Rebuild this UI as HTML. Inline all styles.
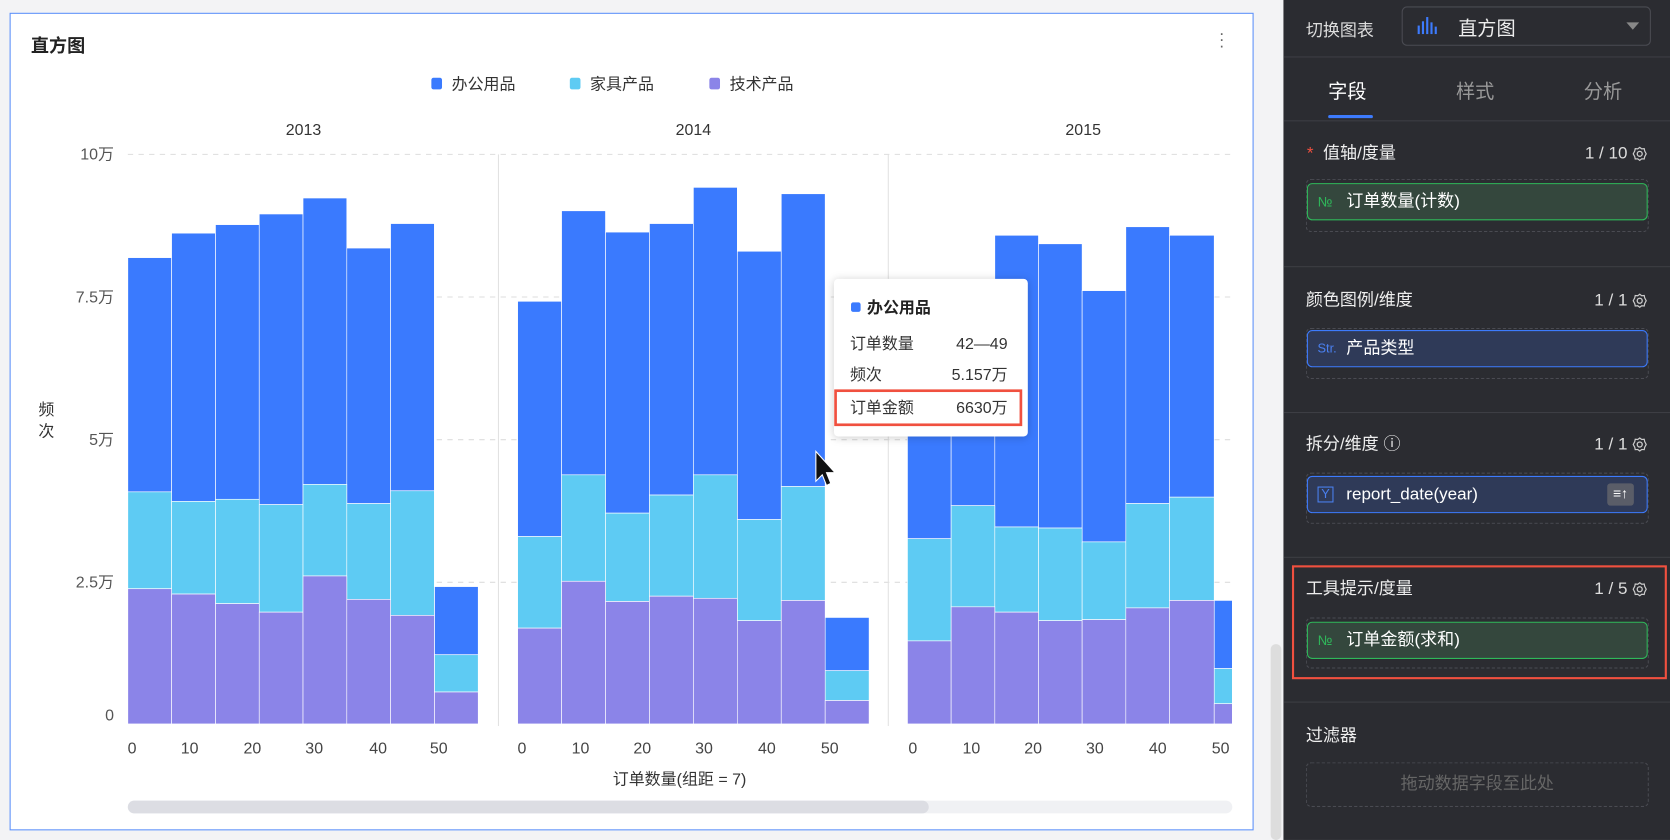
<!DOCTYPE html>
<html><head><meta charset="utf-8"><style>
*{margin:0;padding:0;box-sizing:border-box}
body{width:1670px;height:840px;overflow:hidden;background:#f3f3f5;font-family:"Liberation Sans","Noto Sans CJK SC",sans-serif}
#w{position:absolute;left:0;top:0;width:1568px;height:789px;transform:scale(1.0651,1.0646);transform-origin:0 0}
.a{position:absolute;white-space:nowrap}
#card{position:absolute;left:9px;top:12px;width:1168px;height:768px;background:#fff;border:1.5px solid #5b8ff9}
#panel{position:absolute;left:1205px;top:0;width:363px;height:789px;background:#2b2c31;color:#e8e8ea}
.hl{position:absolute;left:0;width:363px;height:1px;background:#3d3e44}
.sec{font-size:16px;color:#eee;line-height:20px}
.cnt{font-size:16px;color:#ddd;line-height:20px;right:21px}
.cnt svg{vertical-align:-3px;margin-left:4px}
.fld{position:absolute;left:22px;width:320px;height:35px;border-radius:5px;font-size:16px;line-height:33px;padding-left:36px;color:#fff}
.dz{position:absolute;left:21px;width:322px;border:1px dashed #4a4b52;border-radius:5px}
.g{background:#34473d;border:1.5px solid #2fb85a}
.b{background:#2f3a58;border:1.5px solid #3d7bfd}
.ic{position:absolute;left:9px;top:0;font-size:13px}
</style></head><body><div id="w">
<div id="card">
<div class="a" style="left:19px;top:16px;font-size:17px;font-weight:bold;color:#222">直方图</div>
<div class="a" style="left:1134px;top:16px;font-size:16px;color:#666;line-height:6px;width:6px;text-align:center">·<br>·<br>·</div>
</div>
<svg class="a" style="left:0;top:0" width="1180" height="789" font-family="Liberation Sans,Noto Sans CJK SC,sans-serif">
<g font-size="15" fill="#333">
<rect x="405" y="73" width="10" height="11" rx="2" fill="#3a7afe"/><text x="424" y="84">办公用品</text>
<rect x="535" y="73" width="10" height="11" rx="2" fill="#5ecbf3"/><text x="554" y="84">家具产品</text>
<rect x="666" y="73" width="10" height="11" rx="2" fill="#8b84e8"/><text x="685" y="84">技术产品</text>
</g>
<g font-size="15" fill="#333" text-anchor="middle"><text x="285" y="127">2013</text><text x="651" y="127">2014</text><text x="1017" y="127">2015</text></g>
<g stroke="#ddd" stroke-dasharray="5,5"><line x1="120" x2="1157" y1="145" y2="145"/><line x1="120" x2="1157" y1="279" y2="279"/><line x1="120" x2="1157" y1="413" y2="413"/><line x1="120" x2="1157" y1="547" y2="547"/></g>
<g stroke="#e2e2e2"><line x1="468" x2="468" y1="145" y2="682"/><line x1="834" x2="834" y1="145" y2="682"/></g>
<g font-size="15" fill="#555" text-anchor="end"><text x="107" y="150">10万</text><text x="107" y="284">7.5万</text><text x="107" y="418">5万</text><text x="107" y="552">2.5万</text><text x="107" y="677">0</text></g>
<text x="36" y="390" font-size="15" fill="#333">频</text><text x="36" y="410" font-size="15" fill="#333">次</text>
<g stroke="#fff" stroke-width="0.6">
<g fill="#3a7afe">
<rect x="120" y="242" width="41.1" height="220"/><rect x="161.1" y="219" width="41.1" height="252"/><rect x="202.3" y="211" width="41.1" height="258"/><rect x="243.4" y="201" width="41.1" height="273"/><rect x="284.5" y="186" width="41.1" height="269"/><rect x="325.6" y="233" width="41.1" height="240"/><rect x="366.7" y="210" width="41.1" height="251"/><rect x="407.9" y="551" width="41.1" height="64"/>
<rect x="486" y="283" width="41.25" height="221"/><rect x="527.25" y="198" width="41.25" height="248"/><rect x="568.5" y="218" width="41.25" height="264"/><rect x="609.75" y="210" width="41.25" height="255"/><rect x="651" y="176" width="41.25" height="270"/><rect x="692.25" y="236" width="41.25" height="252"/><rect x="733.5" y="182" width="41.25" height="275"/><rect x="774.75" y="580" width="41.25" height="50"/>
<rect x="852" y="390" width="41" height="116"/><rect x="893" y="300" width="41" height="175"/><rect x="934" y="221" width="41" height="274"/><rect x="975" y="229" width="41" height="267"/><rect x="1016" y="273" width="41" height="236"/><rect x="1057" y="213" width="41" height="260"/><rect x="1098" y="221" width="42" height="246"/><rect x="1140" y="564" width="17" height="64"/>
</g>
<g fill="#5ecbf3">
<rect x="120" y="462" width="41.1" height="91"/><rect x="161.1" y="471" width="41.1" height="87"/><rect x="202.3" y="469" width="41.1" height="98"/><rect x="243.4" y="474" width="41.1" height="101"/><rect x="284.5" y="455" width="41.1" height="86"/><rect x="325.6" y="473" width="41.1" height="90"/><rect x="366.7" y="461" width="41.1" height="117"/><rect x="407.9" y="615" width="41.1" height="35"/>
<rect x="486" y="504" width="41.25" height="86"/><rect x="527.25" y="446" width="41.25" height="100"/><rect x="568.5" y="482" width="41.25" height="83"/><rect x="609.75" y="465" width="41.25" height="95"/><rect x="651" y="446" width="41.25" height="116"/><rect x="692.25" y="488" width="41.25" height="95"/><rect x="733.5" y="457" width="41.25" height="107"/><rect x="774.75" y="630" width="41.25" height="28"/>
<rect x="852" y="506" width="41" height="96"/><rect x="893" y="475" width="41" height="95"/><rect x="934" y="495" width="41" height="80"/><rect x="975" y="496" width="41" height="87"/><rect x="1016" y="509" width="41" height="73"/><rect x="1057" y="473" width="41" height="98"/><rect x="1098" y="467" width="42" height="97"/><rect x="1140" y="628" width="17" height="33"/>
</g>
<g fill="#8b84e8">
<rect x="120" y="553" width="41.1" height="127"/><rect x="161.1" y="558" width="41.1" height="122"/><rect x="202.3" y="567" width="41.1" height="113"/><rect x="243.4" y="575" width="41.1" height="105"/><rect x="284.5" y="541" width="41.1" height="139"/><rect x="325.6" y="563" width="41.1" height="117"/><rect x="366.7" y="578" width="41.1" height="102"/><rect x="407.9" y="650" width="41.1" height="30"/>
<rect x="486" y="590" width="41.25" height="90"/><rect x="527.25" y="546" width="41.25" height="134"/><rect x="568.5" y="565" width="41.25" height="115"/><rect x="609.75" y="560" width="41.25" height="120"/><rect x="651" y="562" width="41.25" height="118"/><rect x="692.25" y="583" width="41.25" height="97"/><rect x="733.5" y="564" width="41.25" height="116"/><rect x="774.75" y="658" width="41.25" height="22"/>
<rect x="852" y="602" width="41" height="78"/><rect x="893" y="570" width="41" height="110"/><rect x="934" y="575" width="41" height="105"/><rect x="975" y="583" width="41" height="97"/><rect x="1016" y="582" width="41" height="98"/><rect x="1057" y="571" width="41" height="109"/><rect x="1098" y="564" width="42" height="116"/><rect x="1140" y="661" width="17" height="19"/>
</g></g>
<g font-size="15" fill="#444" text-anchor="middle">
<text x="124" y="708">0</text><text x="178" y="708">10</text><text x="237" y="708">20</text><text x="295" y="708">30</text><text x="355" y="708">40</text><text x="412" y="708">50</text>
<text x="490" y="708">0</text><text x="545" y="708">10</text><text x="603" y="708">20</text><text x="661" y="708">30</text><text x="720" y="708">40</text><text x="779" y="708">50</text>
<text x="857" y="708">0</text><text x="912" y="708">10</text><text x="970" y="708">20</text><text x="1028" y="708">30</text><text x="1087" y="708">40</text><text x="1146" y="708">50</text>
<text x="638" y="737" fill="#333">订单数量(组距 = 7)</text>
</g>
<rect x="120" y="752" width="1037" height="12" rx="6" fill="#f0f1f4"/><rect x="120" y="752" width="752" height="12" rx="6" fill="#dcdde3"/>
<rect x="783" y="262" width="182" height="148" rx="4" fill="#fff" style="filter:drop-shadow(0 1px 4px rgba(0,0,0,.2))"/>
<rect x="799" y="284" width="9" height="9" rx="2" fill="#3a7afe"/>
<text x="814" y="294" font-size="15" font-weight="bold" fill="#222">办公用品</text>
<g font-size="15" fill="#333"><text x="798" y="328">订单数量</text><text x="946" y="328" text-anchor="end">42—49</text>
<text x="798" y="357">频次</text><text x="946" y="357" text-anchor="end">5.157万</text>
<text x="798" y="388">订单金额</text><text x="946" y="388" text-anchor="end">6630万</text></g>
<rect x="784.5" y="367" width="174" height="32" fill="none" stroke="#f0503f" stroke-width="2.5"/>
<path d="M766 424 L766 452 L772 446 L776 456 L780 454 L776 444 L784 444 Z" fill="#111" stroke="#fff" stroke-width="1"/>
</svg>
<div class="a" style="left:1193px;top:605px;width:10px;height:184px;background:#ddd;border-radius:5px"></div>
<div id="panel">
<div class="a" style="left:21px;top:15px;font-size:16px;color:#ddd">切换图表</div>
<div class="a" style="left:111px;top:6px;width:234px;height:37px;border:1px solid #4a4b52;border-radius:5px"></div>
<svg class="a" style="left:125px;top:15px" width="20" height="18"><g fill="#3d7bfd"><rect x="1" y="9" width="2" height="8"/><rect x="5" y="5" width="2" height="12"/><rect x="9" y="1" width="2" height="16"/><rect x="13" y="6" width="2" height="11"/><rect x="17" y="10" width="2" height="7"/></g></svg>
<div class="a" style="left:164px;top:13px;font-size:18px;color:#eee">直方图</div>
<div class="a" style="left:322px;top:21px;width:0;height:0;border-left:6px solid transparent;border-right:6px solid transparent;border-top:7px solid #888"></div>
<div class="hl" style="top:53px"></div>
<div class="a" style="left:42px;top:72px;font-size:18px;color:#fff">字段</div>
<div class="a" style="left:162px;top:72px;font-size:18px;color:#999">样式</div>
<div class="a" style="left:282px;top:72px;font-size:18px;color:#999">分析</div>
<div class="a" style="left:42px;top:108px;width:42px;height:3px;background:#3d7bfd;border-radius:2px"></div>
<div class="hl" style="top:113px"></div>
<div class="a sec" style="left:22px;top:135px"><span style="color:#f0503f">*</span>&nbsp; 值轴/度量</div>
<div class="a cnt" style="top:135px">1 / 10<svg width="15" height="15" viewBox="0 0 16 16"><circle cx="8" cy="8" r="2.5" fill="none" stroke="#ccc" stroke-width="1.3"/><path d="M8 1.5 L10 3 L12.5 2.8 L13 5.2 L14.5 8 L13 10.8 L12.5 13.2 L10 13 L8 14.5 L6 13 L3.5 13.2 L3 10.8 L1.5 8 L3 5.2 L3.5 2.8 L6 3 Z" fill="none" stroke="#ccc" stroke-width="1.2"/></svg></div>
<div class="dz" style="top:168px;height:50px"></div>
<div class="fld g" style="top:172px"><span class="ic" style="color:#2fb85a">№</span>订单数量(计数)</div>
<div class="hl" style="top:250px"></div>
<div class="a sec" style="left:21px;top:273px">颜色图例/维度</div>
<div class="a cnt" style="top:273px">1 / 1<svg width="15" height="15" viewBox="0 0 16 16"><circle cx="8" cy="8" r="2.5" fill="none" stroke="#ccc" stroke-width="1.3"/><path d="M8 1.5 L10 3 L12.5 2.8 L13 5.2 L14.5 8 L13 10.8 L12.5 13.2 L10 13 L8 14.5 L6 13 L3.5 13.2 L3 10.8 L1.5 8 L3 5.2 L3.5 2.8 L6 3 Z" fill="none" stroke="#ccc" stroke-width="1.2"/></svg></div>
<div class="dz" style="top:308px;height:48px"></div>
<div class="fld b" style="top:310px"><span class="ic" style="color:#4a80f0;font-size:12px">Str.</span>产品类型</div>
<div class="hl" style="top:387px"></div>
<div class="a sec" style="left:21px;top:408px">拆分/维度 ⓘ</div>
<div class="a cnt" style="top:408px">1 / 1<svg width="15" height="15" viewBox="0 0 16 16"><circle cx="8" cy="8" r="2.5" fill="none" stroke="#ccc" stroke-width="1.3"/><path d="M8 1.5 L10 3 L12.5 2.8 L13 5.2 L14.5 8 L13 10.8 L12.5 13.2 L10 13 L8 14.5 L6 13 L3.5 13.2 L3 10.8 L1.5 8 L3 5.2 L3.5 2.8 L6 3 Z" fill="none" stroke="#ccc" stroke-width="1.2"/></svg></div>
<div class="dz" style="top:444px;height:48px"></div>
<div class="fld b" style="top:447px"><span class="ic" style="color:#4a80f0;border:1.5px solid #4a80f0;line-height:13px;top:9px;width:15px;text-align:center;font-size:12px">Y</span>report_date(year)<span class="a" style="right:12px;top:6px;width:25px;height:21px;background:#5a5d68;border-radius:3px;line-height:20px;text-align:center;font-size:13px">≡↑</span></div>
<div class="hl" style="top:523px"></div>
<div class="a" style="left:8px;top:531px;width:352px;height:107px;border:2.5px solid #f0503f"></div>
<div class="a sec" style="left:21px;top:544px">工具提示/度量</div>
<div class="a cnt" style="top:544px">1 / 5<svg width="15" height="15" viewBox="0 0 16 16"><circle cx="8" cy="8" r="2.5" fill="none" stroke="#ccc" stroke-width="1.3"/><path d="M8 1.5 L10 3 L12.5 2.8 L13 5.2 L14.5 8 L13 10.8 L12.5 13.2 L10 13 L8 14.5 L6 13 L3.5 13.2 L3 10.8 L1.5 8 L3 5.2 L3.5 2.8 L6 3 Z" fill="none" stroke="#ccc" stroke-width="1.2"/></svg></div>
<div class="dz" style="top:580px;height:48px"></div>
<div class="fld g" style="top:584px"><span class="ic" style="color:#2fb85a">№</span>订单金额(求和)</div>
<div class="hl" style="top:659px"></div>
<div class="a sec" style="left:21px;top:682px">过滤器</div>
<div class="dz" style="top:716px;height:42px;text-align:center;line-height:40px;font-size:16px;color:#666">拖动数据字段至此处</div>
</div>
</div></body></html>
